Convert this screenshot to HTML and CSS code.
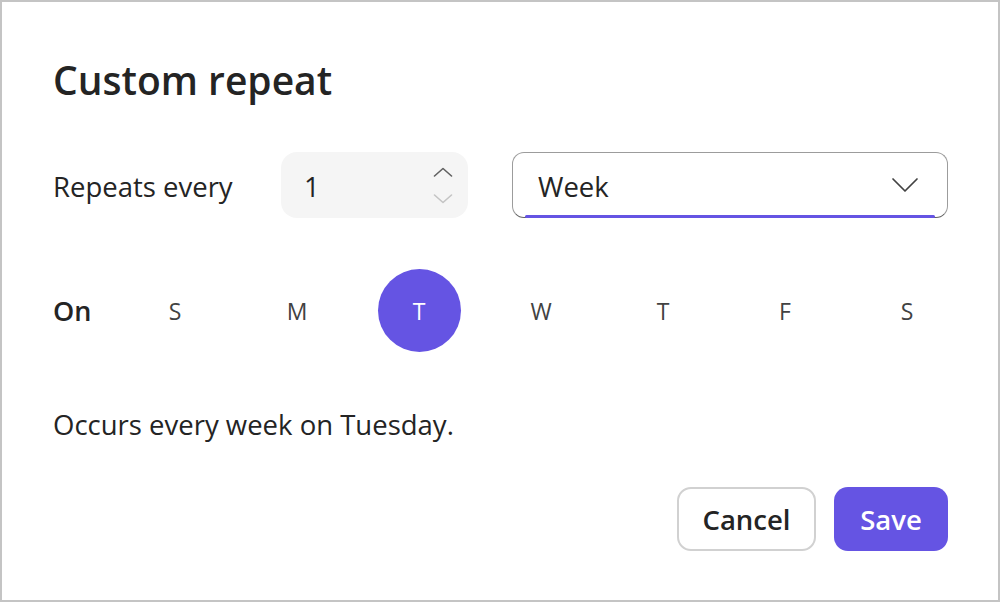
FILE: index.html
```html
<!DOCTYPE html>
<html lang="en">
<head>
<meta charset="utf-8">
<title>Custom repeat</title>
<link rel="stylesheet" href="styles.css">
</head>
<body>
<div class="dialog">
  <h1 class="title">Custom repeat</h1>

  <div class="repeat-row">
    <span class="label">Repeats every</span>
    <div class="number-input">
      <span class="number-value">1</span>
      <div class="spinner">
        <svg class="chev up" width="20" height="10" viewBox="0 0 20 10"><path d="M1.5 9 L10 1.5 L18.5 9" fill="none" stroke="#616161" stroke-width="1.6" stroke-linecap="round" stroke-linejoin="round"/></svg>
        <svg class="chev down" width="20" height="10" viewBox="0 0 20 10"><path d="M1.5 1 L10 8.5 L18.5 1" fill="none" stroke="#c4c4c4" stroke-width="1.6" stroke-linecap="round" stroke-linejoin="round"/></svg>
      </div>
    </div>
    <div class="dropdown">
      <span class="dropdown-value">Week</span>
      <svg class="dropdown-chev" width="28" height="16" viewBox="0 0 28 16"><path d="M2 2 L14 14 L26 2" fill="none" stroke="#424242" stroke-width="1.7" stroke-linecap="round" stroke-linejoin="round"/></svg>
    </div>
  </div>

  <div class="days-row">
    <span class="on-label">On</span>
    <span class="day">S</span>
    <span class="day">M</span>
    <span class="day selected">T</span>
    <span class="day">W</span>
    <span class="day">T</span>
    <span class="day">F</span>
    <span class="day">S</span>
  </div>

  <p class="summary">Occurs every week on Tuesday.</p>

  <div class="actions">
    <button class="btn btn-secondary">Cancel</button>
    <button class="btn btn-primary">Save</button>
  </div>
</div>
</body>
</html>
```
FILE: styles.css
```css
html, body {
  margin: 0;
  padding: 0;
  background: #ffffff;
}

.dialog {
  box-sizing: border-box;
  width: 1000px;
  height: 602px;
  border: 2px solid #c4c4c4;
  padding: 51px 50px 0 51px;
  font-family: "Segoe UI", "Open Sans", "Noto Sans", sans-serif;
  color: #242424;
  display: flex;
  flex-direction: column;
}

.title {
  margin: 0;
  font-size: 39px;
  font-weight: 600;
  line-height: 54px;
}

.repeat-row {
  margin-top: 45px;
  display: flex;
  align-items: center;
  height: 66px;
}

.label {
  width: 228px;
  flex: none;
  font-size: 27.5px;
  line-height: 36px;
  padding-top: 3px;
}

.number-input {
  box-sizing: border-box;
  width: 187px;
  flex: none;
  height: 66px;
  background: #f5f5f5;
  border-radius: 16px;
  padding: 0 15px 0 23px;
  display: flex;
  align-items: center;
  justify-content: space-between;
}

.number-value {
  font-size: 27.5px;
  line-height: 36px;
  padding-top: 3px;
}

.spinner {
  display: flex;
  flex-direction: column;
  gap: 17px;
}

.chev {
  display: block;
}

.dropdown {
  position: relative;
  box-sizing: border-box;
  flex: 1;
  margin-left: 44px;
  height: 66px;
  border: 1.5px solid #9c9c9c;
  border-bottom-color: #616161;
  border-radius: 12px;
  padding: 0 28px 0 25px;
  display: flex;
  align-items: center;
  justify-content: space-between;
}

.dropdown::after {
  content: "";
  position: absolute;
  left: 12px;
  right: 12px;
  bottom: -1px;
  height: 3px;
  background: #6554e3;
  border-radius: 2px;
}

.dropdown-value {
  font-size: 27.5px;
  line-height: 36px;
  padding-top: 3px;
}

.dropdown-chev {
  display: block;
}

.days-row {
  margin-top: 51px;
  display: grid;
  grid-template-columns: 41.5px repeat(7, 83px);
  column-gap: 39px;
  align-items: center;
}

.on-label {
  font-size: 27px;
  font-weight: 600;
  line-height: 36px;
  white-space: nowrap;
}

.day {
  width: 83px;
  height: 83px;
  border-radius: 50%;
  display: flex;
  align-items: center;
  justify-content: center;
  font-size: 23px;
  color: #424242;
}

.day.selected {
  background: #6554e3;
  color: #ffffff;
}

.summary {
  margin: 55px 0 0 0;
  font-size: 27.5px;
  line-height: 36px;
}

.actions {
  margin-top: 44px;
  display: flex;
  justify-content: flex-end;
  gap: 18px;
}

.btn {
  box-sizing: border-box;
  height: 64px;
  border-radius: 14px;
  font-family: inherit;
  font-size: 27.5px;
  font-weight: 600;
  padding: 0;
  cursor: pointer;
}

.btn-secondary {
  width: 139px;
  background: #ffffff;
  border: 2px solid #d1d1d1;
  color: #242424;
}

.btn-primary {
  width: 114px;
  background: #6554e3;
  border: none;
  color: #ffffff;
}
```
